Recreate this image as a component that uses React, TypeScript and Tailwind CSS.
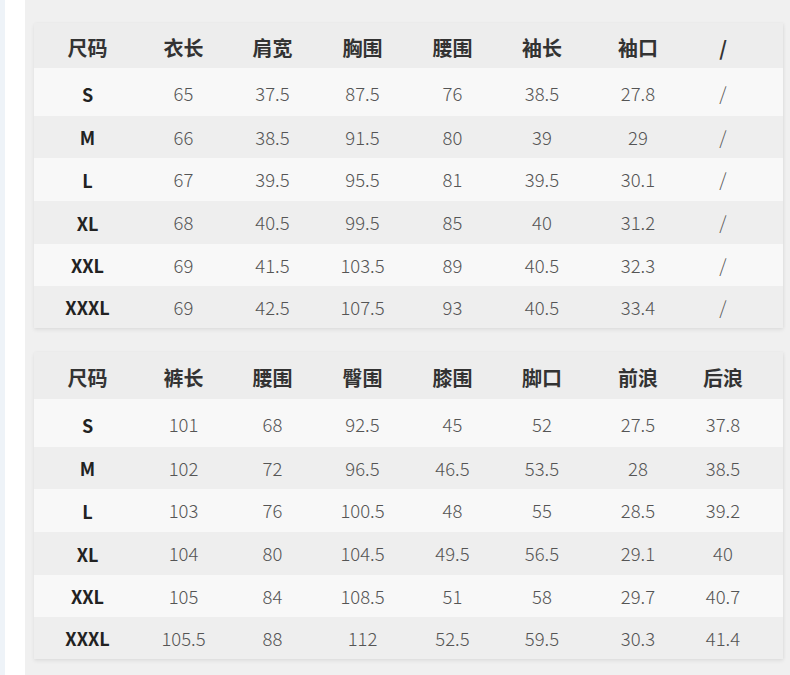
import React from "react";

const top = {
  head: ["尺码", "衣长", "肩宽", "胸围", "腰围", "袖长", "袖口", "/"],
  rows: [
    ["S", "65", "37.5", "87.5", "76", "38.5", "27.8", "/"],
    ["M", "66", "38.5", "91.5", "80", "39", "29", "/"],
    ["L", "67", "39.5", "95.5", "81", "39.5", "30.1", "/"],
    ["XL", "68", "40.5", "99.5", "85", "40", "31.2", "/"],
    ["XXL", "69", "41.5", "103.5", "89", "40.5", "32.3", "/"],
    ["XXXL", "69", "42.5", "107.5", "93", "40.5", "33.4", "/"],
  ],
};

const bottom = {
  head: ["尺码", "裤长", "腰围", "臀围", "膝围", "脚口", "前浪", "后浪"],
  rows: [
    ["S", "101", "68", "92.5", "45", "52", "27.5", "37.8"],
    ["M", "102", "72", "96.5", "46.5", "53.5", "28", "38.5"],
    ["L", "103", "76", "100.5", "48", "55", "28.5", "39.2"],
    ["XL", "104", "80", "104.5", "49.5", "56.5", "29.1", "40"],
    ["XXL", "105", "84", "108.5", "51", "58", "29.7", "40.7"],
    ["XXXL", "105.5", "88", "112", "52.5", "59.5", "30.3", "41.4"],
  ],
};

const heights = ["h-[42px]", "h-[43px]", "h-[43px]", "h-[42px]", "h-[42px]"];

function Table({ data, headH }: { data: { head: string[]; rows: string[][] }; headH: string }) {
  const grid = "grid grid-cols-[107px_85px_93px_87px_93px_86px_106px_64px] items-center";
  return (
    <div className="shadow-[0_2px_4px_rgba(0,0,0,0.07),1px_0_3px_rgba(0,0,0,0.04)]">
      <div className={`${grid} ${headH} bg-[#ededed] pt-[5px]`}>
        {data.head.map((h, i) => (
          <div key={i} className="text-center text-[20px] font-bold text-[#333]">
            {h}
          </div>
        ))}
      </div>
      {data.rows.map((r, ri) => (
        <div
          key={ri}
          className={`${grid} ${ri === 0 ? "h-[48px] pt-[3px]" : heights[ri - 1]} ${
            ri % 2 === 0 ? "bg-[#f8f8f8]" : "bg-[#eeeeee]"
          }`}
        >
          {r.map((c, ci) => (
            <div
              key={ci}
              className={
                ci === 0
                  ? "text-center text-[18px] font-bold text-[#222]"
                  : "text-center text-[18.5px] font-light text-[#555]"
              }
            >
              {c}
            </div>
          ))}
        </div>
      ))}
    </div>
  );
}

export default function App() {
  return (
    <div className="flex h-[675px] w-[790px] overflow-hidden font-['Noto_Sans_CJK_SC','Noto_Sans',sans-serif] leading-none">
      <div className="w-[5px] bg-[#eef3f8]" />
      <div className="w-[20px] bg-white" />
      <div className="flex-1 bg-[#f0f0f0] pl-[9px] pr-[7px] pt-[23px]">
        <Table data={top} headH="h-[45px]" />
        <div className="h-[24px]" />
        <Table data={bottom} headH="h-[47px]" />
      </div>
    </div>
  );
}
